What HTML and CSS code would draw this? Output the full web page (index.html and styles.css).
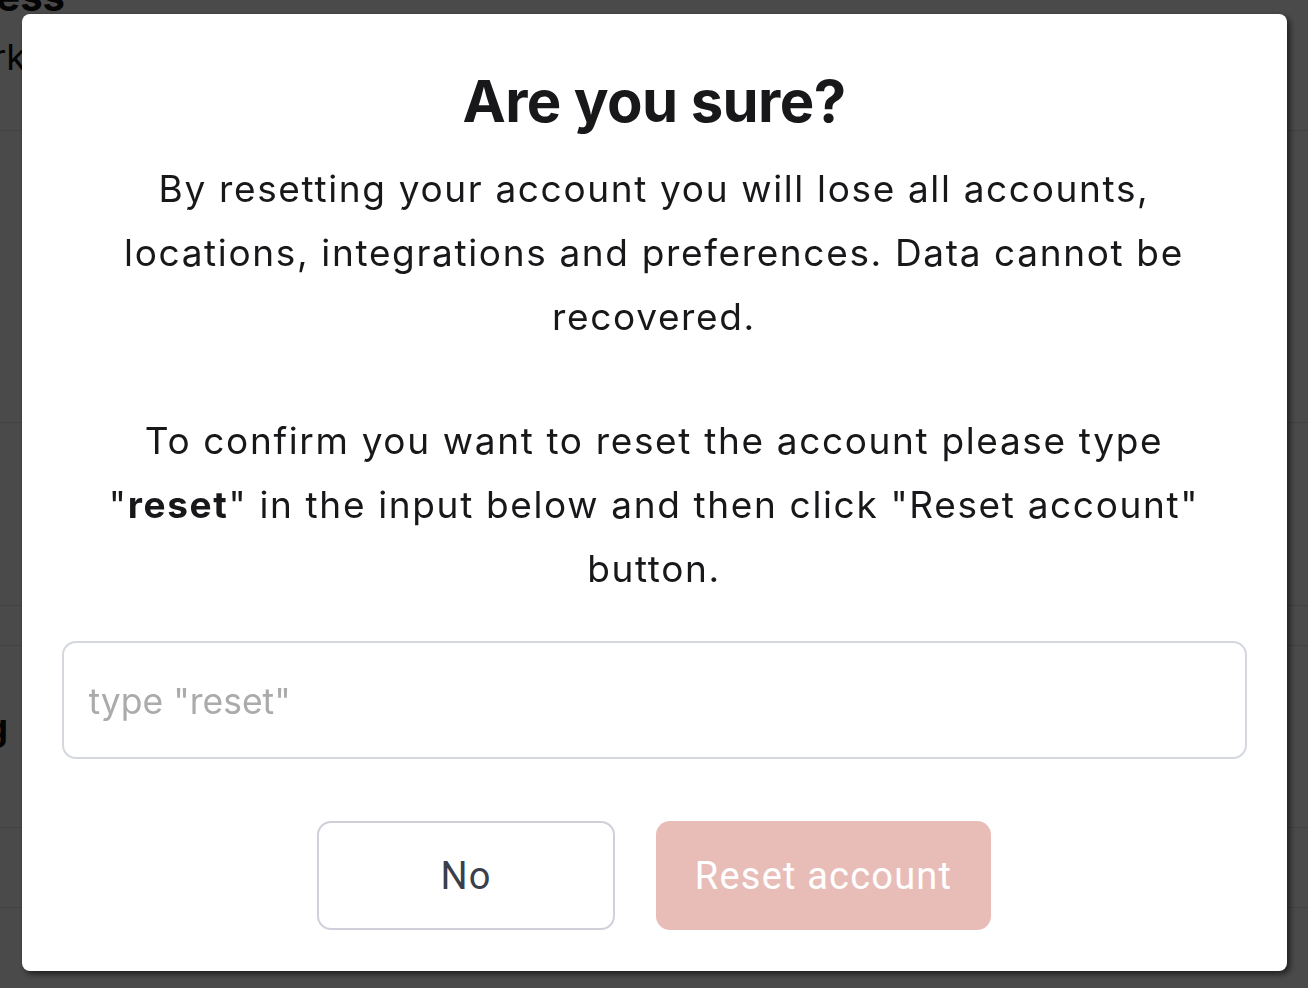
FILE: index.html
```html
<!DOCTYPE html>
<html lang="en">
<head>
<meta charset="utf-8">
<title>Reset account</title>
<link rel="stylesheet" href="styles.css">
</head>
<body>
<div class="page">
  <section class="row row-1">
    <div class="row-title">Business</div>
    <div class="row-sub">Network</div>
  </section>
  <section class="row row-2"></section>
  <section class="row row-3"></section>
  <section class="row row-4"></section>
  <section class="row row-5">
    <div class="row-title billing">Billing</div>
  </section>
  <section class="row row-6"></section>
  <section class="row row-7"></section>
</div>

<div class="overlay">
  <div class="modal" role="dialog" aria-modal="true">
    <h1 class="modal-title">Are you sure?</h1>
    <p class="modal-text">By resetting your account you will lose all accounts, locations, integrations and preferences. Data cannot be recovered.</p>
    <p class="modal-text">To confirm you want to reset the account please type "<strong>reset</strong>" in the input below and then click "Reset account" button.</p>
    <input class="modal-input" type="text" placeholder="type &quot;reset&quot;">
    <div class="modal-actions">
      <button class="btn btn-no" type="button">No</button>
      <button class="btn btn-reset" type="button" disabled>Reset account</button>
    </div>
  </div>
</div>
</body>
</html>
```

FILE: styles.css
```css
* { box-sizing: border-box; }

html, body {
  margin: 0;
  padding: 0;
  height: 100%;
  overflow: hidden;
}

body {
  background: #ffffff;
  font-family: "Inter", "Noto Sans", sans-serif;
  color: #111111;
}

/* underlying page (mostly hidden by the overlay) */
.page {
  display: flex;
  flex-direction: column;
}

.row {
  border-bottom: 1px solid #e2e2e2;
  overflow: hidden;
}

.row-1 { height: 131px; }
.row-2 { height: 292px; }
.row-3 { height: 183px; }
.row-4 { height: 40px; }
.row-5 { height: 182px; padding-top: 61px; }
.row-6 { height: 80px; }
.row-7 { height: 90px; border-bottom: none; }

.row-title {
  width: 400px;
  margin-left: -335px;
  text-align: right;
  font-weight: 700;
  font-size: 40px;
  line-height: 40px;
  margin-top: -23px;
  color: #111;
  white-space: nowrap;
}

.row-title.billing {
  margin-top: 0;
  margin-left: -392px;
  font-size: 36px;
}

.row-sub {
  width: 400px;
  margin-left: -374px;
  text-align: right;
  font-size: 36px;
  line-height: 40px;
  margin-top: 20px;
  color: #111;
  white-space: nowrap;
}

/* overlay + modal */
.overlay {
  position: fixed;
  inset: 0;
  background: rgba(0, 0, 0, 0.71);
  display: flex;
  align-items: flex-start;
  justify-content: center;
  padding-top: 14px;
}

.modal {
  width: 1265px;
  background: #ffffff;
  border-radius: 8px;
  box-shadow: 3px 3px 6px rgba(0, 0, 0, 0.6);
  padding: 52px 40px 41px;
  display: flex;
  flex-direction: column;
  align-items: stretch;
  text-align: center;
}

.modal-title {
  margin: 0 0 21px;
  font-size: 58px;
  line-height: 70px;
  font-weight: 700;
  color: #18181b;
  letter-spacing: -0.6px;
}

.modal-text {
  margin: 0;
  font-size: 37px;
  line-height: 64px;
  letter-spacing: 1.65px;
  color: #18181b;
  padding: 0 40px;
}

.modal-text + .modal-text {
  margin-top: 60px;
}

.modal-text strong { font-weight: 700; }

.modal-input {
  margin-top: 40px;
  height: 118px;
  width: 100%;
  border: 2px solid #d4d8de;
  border-radius: 14px;
  padding: 2px 25px 0;
  font-family: "Inter", sans-serif;
  font-size: 35.5px;
  color: #18181b;
  outline: none;
  background: #fff;
}

.modal-input::placeholder { color: #ababab; }

.modal-actions {
  margin-top: 62px;
  display: flex;
  justify-content: center;
  gap: 41px;
}

.btn {
  height: 109px;
  border-radius: 14px;
  font-family: "Roboto", sans-serif;
  font-size: 38px;
  letter-spacing: 1.2px;
  cursor: pointer;
}

.btn-no {
  width: 298px;
  background: #ffffff;
  border: 2px solid #d0d0da;
  color: #3a3f4b;
}

.btn-reset {
  width: 335px;
  background: #e8bdb8;
  border: none;
  color: #ffffff;
}
```
